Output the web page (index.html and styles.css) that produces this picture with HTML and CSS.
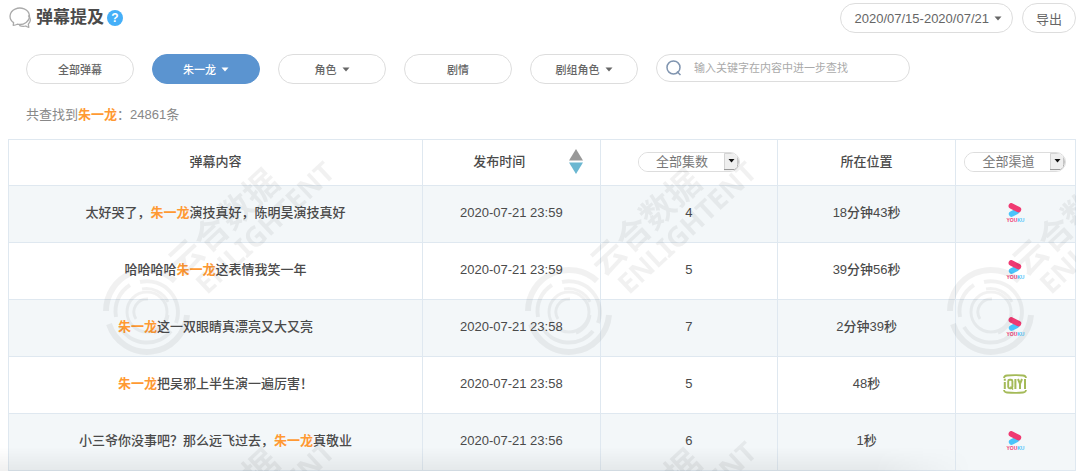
FILE: index.html
```html
<!DOCTYPE html>
<html lang="zh-CN">
<head>
    <meta charset="UTF-8">
    <meta name="viewport" content="width=device-width, initial-scale=1.0">
    <title>弹幕提及</title>
    <link rel="stylesheet" href="styles.css">
</head>
<body>
    <!-- Shared icons -->
    <svg class="sprite" aria-hidden="true">
        <symbol id="caret" viewBox="0 0 8 5"><path d="M0.5 0.5h7L4 4.5z" fill="currentColor"/></symbol>
        <symbol id="select-arrow" viewBox="0 0 15 18">
            <path d="M0 0h15v18H0z" fill="#efefef"/>
            <path d="M0.5 17V0.5H14" fill="none" stroke="#d4d4d4"/>
            <path d="M0 16.5h11q3-1 3-5V4" fill="none" stroke="#999"/>
            <path d="M4.500 6h6L7.500 9.500z" fill="#111"/>
        </symbol>
        <symbol id="youku" viewBox="0 0 14 14">
            <path d="M3.600 11L8.500 8.500" stroke="#4ac4fb" stroke-width="5.600" stroke-linecap="round"/>
            <path d="M3.400 2.900L10.400 6.600" stroke="#f03a72" stroke-width="5.600" stroke-linecap="round"/>
        </symbol>
        <symbol id="iqiyi" viewBox="0 0 24 20">
            <path d="M1 4Q1.200 1.800 4 1.500Q12 0.700 20 1.500Q22.800 1.800 23 4M1 16Q1.200 18.200 4 18.500Q12 19.300 20 18.500Q22.800 18.200 23 16" fill="none" stroke="#a4ba58" stroke-width="1.800"/>
            <path d="M1.800 4.800v2M1.800 8v7M12.400 5v10M15 5l2 4.800V15M19 5l-2 4.800M22 5v10" fill="none" stroke="#a4ba58" stroke-width="2"/>
            <rect x="5.200" y="5.800" width="4.200" height="8.400" rx="1.500" fill="none" stroke="#a4ba58" stroke-width="1.900"/>
            <path d="M7.500 12.500l2.500 3" stroke="#a4ba58" stroke-width="1.400"/>
        </symbol>
    </svg>

    <!-- Header -->
    <header class="header">
        <svg class="chat-icon" viewBox="0 0 24 22" fill="none" stroke="#aaa" stroke-width="1.300" stroke-linejoin="round">
            <path d="M5.200 18.300L5.600 15.600A9.700 8.200 0 1 1 9.300 17.200Q7.500 18.200 5.200 18.300z"/>
            <path d="M20.200 8.500Q24.500 12.500 20.300 17.200L20.800 20.300Q18.800 19.900 17.800 19Q14.500 20 11.200 18.400"/>
        </svg>
        <h1 class="title">弹幕提及</h1>
        <button class="help" aria-label="帮助">?</button>
        <div class="header-actions">
            <button class="pill pill-date">2020/07/15-2020/07/21<svg class="caret"><use href="#caret"/></svg></button>
            <button class="pill pill-export">导出</button>
        </div>
    </header>

    <main>
        <!-- Filters -->
        <div class="filters">
            <button class="pill pill-filter">全部弹幕</button>
            <button class="pill pill-filter active">朱一龙<svg class="caret"><use href="#caret"/></svg></button>
            <button class="pill pill-filter">角色<svg class="caret"><use href="#caret"/></svg></button>
            <button class="pill pill-filter">剧情</button>
            <button class="pill pill-filter">剧组角色<svg class="caret"><use href="#caret"/></svg></button>
            <label class="search">
                <svg class="search-icon" viewBox="0 0 16 16" fill="none" stroke="#8095b0" stroke-width="1.500">
                    <circle cx="7.500" cy="7.500" r="6.500"/>
                    <path d="M11 11.500l3.500 3.500"/>
                </svg>
                <input type="text" class="search-input" placeholder="输入关键字在内容中进一步查找" aria-label="关键字">
            </label>
        </div>

        <p class="summary">共查找到<em>朱一龙</em>：24861条</p>

        <!-- Results -->
        <div class="table-wrap">
            <table class="table">
                <colgroup>
                    <col class="col-content">
                    <col class="col-mid">
                    <col class="col-mid">
                    <col class="col-mid">
                    <col>
                </colgroup>
                <thead>
                    <tr>
                        <th>弹幕内容</th>
                        <th>
                            <div class="sortable">
                                发布时间
                                <button class="sort" aria-label="排序">
                                    <svg viewBox="0 0 14 25"><path d="M7 0l7 11.500H0z" fill="#999"/><path d="M0 13.500h14L7 25z" fill="#6bb7d1"/></svg>
                                </button>
                            </div>
                        </th>
                        <th>
                            <div class="select-box">
                                <select class="select" aria-label="集数"><option>全部集数</option></select>
                                <svg class="select-arrow"><use href="#select-arrow"/></svg>
                            </div>
                        </th>
                        <th>所在位置</th>
                        <th>
                            <div class="select-box">
                                <select class="select" aria-label="渠道"><option>全部渠道</option></select>
                                <svg class="select-arrow"><use href="#select-arrow"/></svg>
                            </div>
                        </th>
                    </tr>
                </thead>
                <tbody>
                    <tr>
                        <td>太好哭了，<em>朱一龙</em>演技真好，陈明昊演技真好</td>
                        <td>2020-07-21 23:59</td>
                        <td>4</td>
                        <td>18分钟43秒</td>
                        <td><div class="youku"><svg><use href="#youku"/></svg><span>YOU<b>KU</b></span></div></td>
                    </tr>
                    <tr>
                        <td>哈哈哈哈<em>朱一龙</em>这表情我笑一年</td>
                        <td>2020-07-21 23:59</td>
                        <td>5</td>
                        <td>39分钟56秒</td>
                        <td><div class="youku"><svg><use href="#youku"/></svg><span>YOU<b>KU</b></span></div></td>
                    </tr>
                    <tr>
                        <td><em>朱一龙</em>这一双眼睛真漂亮又大又亮</td>
                        <td>2020-07-21 23:58</td>
                        <td>7</td>
                        <td>2分钟39秒</td>
                        <td><div class="youku"><svg><use href="#youku"/></svg><span>YOU<b>KU</b></span></div></td>
                    </tr>
                    <tr>
                        <td><em>朱一龙</em>把吴邪上半生演一遍厉害！</td>
                        <td>2020-07-21 23:58</td>
                        <td>5</td>
                        <td>48秒</td>
                        <td><svg class="iqiyi"><use href="#iqiyi"/></svg></td>
                    </tr>
                    <tr>
                        <td>小三爷你没事吧？那么远飞过去，<em>朱一龙</em>真敬业</td>
                        <td>2020-07-21 23:56</td>
                        <td>6</td>
                        <td>1秒</td>
                        <td><div class="youku"><svg><use href="#youku"/></svg><span>YOU<b>KU</b></span></div></td>
                    </tr>
                </tbody>
            </table>

            <!-- Repeating watermark -->
            <svg class="watermark" aria-hidden="true">
                <defs>
                    <pattern id="mark" width="422" height="280" patternUnits="userSpaceOnUse">
                        <g fill="none" stroke="#000">
                            <path d="M98 172A41 41 0 0 1 167 142" stroke-width="6"/>
                            <path d="M179 176A40 40 0 0 1 101 185" stroke-width="6"/>
                            <path d="M108 178A31 31 0 0 1 122 146M132 143A31 31 0 0 1 168 184M163 192A31 31 0 0 1 112 188" stroke-width="4"/>
                            <circle cx="139" cy="173" r="20" stroke-width="3"/>
                            <path d="M128 180A13 13 0 0 1 140 160M134 150A24 24 0 0 1 160 163M160 176A22 22 0 0 1 146 194" stroke-width="3"/>
                        </g>
                        <g transform="translate(182 134) rotate(-43)">
                            <text x="-9" y="-2" class="mark-cn">云合数据</text>
                            <text x="-3" y="28" class="mark-en">ENLIGHTENT</text>
                        </g>
                    </pattern>
                </defs>
                <rect width="100%" height="100%" fill="url(#mark)"/>
            </svg>
        </div>
    </main>
    <div class="bottom-fade"></div>
</body>
</html>
```
FILE: styles.css
```css
/* Reset and base styles */
* {
    margin: 0;
    padding: 0;
    box-sizing: border-box;
}

body {
    position: relative;
    padding: 3px 4px 0 8px;
    background: #fff;
    color: #4a4a4a;
    font-family: "Liberation Sans", "Noto Sans CJK SC", sans-serif;
    font-size: 13px;
    line-height: 20px;
}

button, input, select {
    font-family: inherit;
    font-size: inherit;
    color: inherit;
}

button {
    cursor: pointer;
}

em {
    color: #f93;
    font-style: normal;
    font-weight: bold;
}

.sprite {
    position: absolute;
    width: 0;
    height: 0;
}

/* Header */
.header {
    display: flex;
    align-items: center;
    height: 30px;
}

.chat-icon {
    width: 24px;
    height: 22px;
    margin-right: 4px;
}

.title {
    font-size: 17px;
    line-height: 24px;
}

.help {
    width: 16px;
    height: 16px;
    margin-left: 3px;
    border: none;
    border-radius: 50%;
    background: #45aff8;
    color: #fff;
    font-size: 12px;
    font-weight: bold;
    line-height: 16px;
}

.header-actions {
    display: flex;
    gap: 9px;
    margin-left: auto;
}

/* Pill buttons */
.pill {
    display: flex;
    align-items: center;
    justify-content: center;
    gap: 5px;
    height: 30px;
    border: 1px solid #ddd;
    border-radius: 15px;
    background: #fff;
    color: #666;
}

.pill-date {
    padding: 0 10px 0 14px;
}

.pill-export {
    padding: 0 13px;
}

.pill-filter {
    width: 108px;
    font-size: 11px;
    font-weight: 500;
}

.pill-filter.active {
    border-color: #5b94d0;
    background: #5b94d0;
    color: #fff;
}

.caret {
    width: 8px;
    height: 5px;
}

/* Filters */
.filters {
    display: flex;
    gap: 18px;
    padding: 21px 18px 0;
}

.search {
    display: flex;
    align-items: center;
    gap: 12px;
    width: 254px;
    height: 28px;
    padding: 0 9px;
    border: 1px solid #ddd;
    border-radius: 14px;
}

.search-icon {
    flex: none;
    width: 16px;
    height: 16px;
}

.search-input {
    width: 100%;
    border: none;
    outline: none;
    font-size: 11px;
}

.search-input::placeholder {
    color: #aaa;
}

.summary {
    padding: 21px 18px 0;
    margin-bottom: 14px;
    color: #888;
}

/* Table */
.table-wrap {
    position: relative;
    overflow: hidden;
}

.table {
    width: 100%;
    border-collapse: collapse;
    table-layout: fixed;
    text-align: center;
}

.col-content {
    width: 38.8%;
}

.col-mid {
    width: 16.65%;
}

.table th, .table td {
    border: 1px solid #dfe8f0;
    font-weight: 500;
}

.table th {
    height: 46px;
    padding-bottom: 2px;
}

.table td {
    height: 57px;
    padding-bottom: 2px;
}

.table tbody tr:nth-child(odd) {
    background: #f3f7f9;
}

.table svg {
    vertical-align: middle;
}

.sortable {
    display: flex;
    align-items: center;
    justify-content: center;
    gap: 44px;
    padding-left: 34px;
}

.sort {
    display: flex;
    border: none;
    background: none;
}

.sort svg {
    width: 14px;
    height: 25px;
}

.select-box {
    position: relative;
    width: 102px;
    margin: 0 auto;
    border: 1px solid #ddd;
    border-radius: 10px;
    overflow: hidden;
}

.select {
    display: block;
    width: 100%;
    height: 18px;
    padding-left: 17px;
    border: none;
    outline: none;
    appearance: none;
    background: #fff;
    color: #777;
    line-height: 18px;
}

.select-arrow {
    position: absolute;
    top: 0;
    right: 0;
    width: 15px;
    height: 18px;
    pointer-events: none;
}

/* Channel logos */
.youku {
    display: flex;
    flex-direction: column;
    align-items: center;
    color: #f03a72;
    font-size: 5px;
    font-weight: bold;
    line-height: 6px;
}

.youku svg {
    width: 14px;
    height: 14px;
}

.youku b {
    color: #4ac4fb;
}

.iqiyi {
    width: 24px;
    height: 20px;
}

/* Watermark */
.watermark {
    position: absolute;
    inset: 0;
    width: 100%;
    height: 100%;
    opacity: 0.05;
    pointer-events: none;
}

.mark-cn {
    font-family: "Noto Sans CJK SC", sans-serif;
    font-size: 34px;
    font-weight: bold;
}

.mark-en {
    font-family: "Noto Sans", sans-serif;
    font-size: 28px;
    font-weight: bold;
}

/* Shade over the lower edge */
.bottom-fade {
    position: absolute;
    right: 10%;
    bottom: 0;
    left: 0;
    height: 24px;
    background: linear-gradient(rgba(0, 0, 0, 0), rgba(0, 0, 0, 0.06));
    -webkit-mask-image: linear-gradient(to right, #000 90%, transparent);
    mask-image: linear-gradient(to right, #000 90%, transparent);
    pointer-events: none;
}
```
